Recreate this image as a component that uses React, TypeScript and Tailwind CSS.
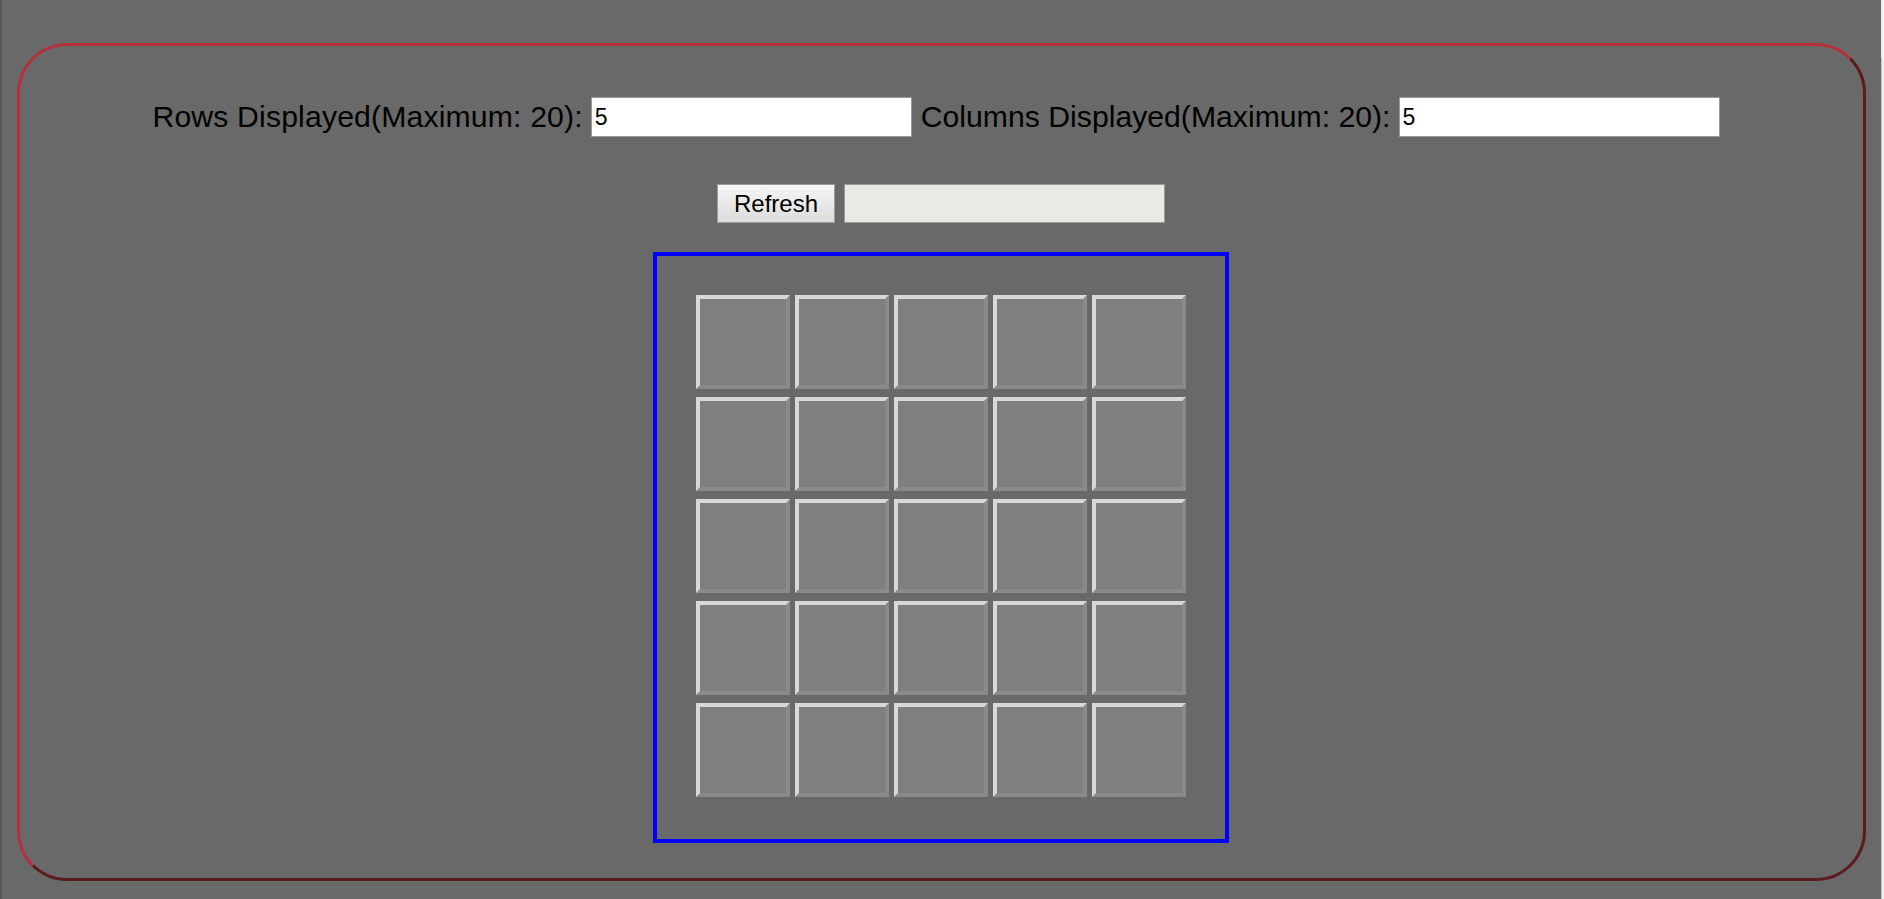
import React from "react";

const rows = [0, 1, 2, 3, 4];
const cols = [0, 1, 2, 3, 4];

export default function App() {
  return (
    <div className="flex h-[899px] w-full overflow-hidden bg-[#696969]">
      <div className="w-[2px] shrink-0 bg-[#575757]" />
      <div className="flex-1 px-[15px] pt-[43px]">
        <div className="flex h-[838px] flex-col items-center rounded-[50px] border-[3px] border-t-[#b5303a] border-l-[#b5303a] border-r-[#5c1b1d] border-b-[#5c1b1d] pt-[51px]">
          <div className="flex items-center justify-center gap-[8px] pr-[11px] font-['Comic_Sans_MS','Liberation_Sans',sans-serif] text-[30.2px] leading-none text-black">
            <span className="tracking-[0.15px]">Rows Displayed(Maximum: 20):</span>
            <input
              defaultValue="5"
              className="h-[40px] w-[321px] border border-[#9a9a9a] bg-white pl-[3px] font-['Liberation_Sans',sans-serif] text-[23px] text-black outline-none"
            />
            <span className="ml-[1px]">Columns Displayed(Maximum: 20):</span>
            <input
              defaultValue="5"
              className="h-[40px] w-[321px] border border-[#9a9a9a] bg-white pl-[3px] font-['Liberation_Sans',sans-serif] text-[23px] text-black outline-none"
            />
          </div>
          <div className="mt-[47px] flex items-center gap-[9px] pr-[1px]">
            <button className="h-[39px] w-[118px] border border-[#9c9c9c] bg-gradient-to-b from-[#f6f6f6] to-[#dcdcdc] font-['Liberation_Sans',sans-serif] text-[24px] leading-none text-black">
              Refresh
            </button>
            <input
              disabled
              className="h-[39px] w-[321px] border border-[#9a9a9a] bg-[#eaeae5] font-['Liberation_Sans',sans-serif] text-[22px]"
            />
          </div>
          <div className="mt-[29px] mr-[1px] border-[4px] border-[#0000ff] pt-[39px] pr-[39px] pb-[42px] pl-[39px]">
            <div className="flex flex-col gap-[8px]">
              {rows.map((r) => (
                <div key={r} className="flex gap-[5px]">
                  {cols.map((c) => (
                    <div
                      key={c}
                      className="h-[94px] w-[94px] border-[4px] border-t-[#d8d8d8] border-l-[#d8d8d8] border-r-[#8a8a8a] border-b-[#8a8a8a] bg-[#7f7f7f]"
                    />
                  ))}
                </div>
              ))}
            </div>
          </div>
        </div>
      </div>
      <div className="flex w-[3px] shrink-0 flex-col">
        <div className="h-[58px] bg-[#f2f2f2]" />
        <div className="flex-1 border-l border-[#c4c4c4] bg-[#f0f0f0]" />
      </div>
    </div>
  );
}
